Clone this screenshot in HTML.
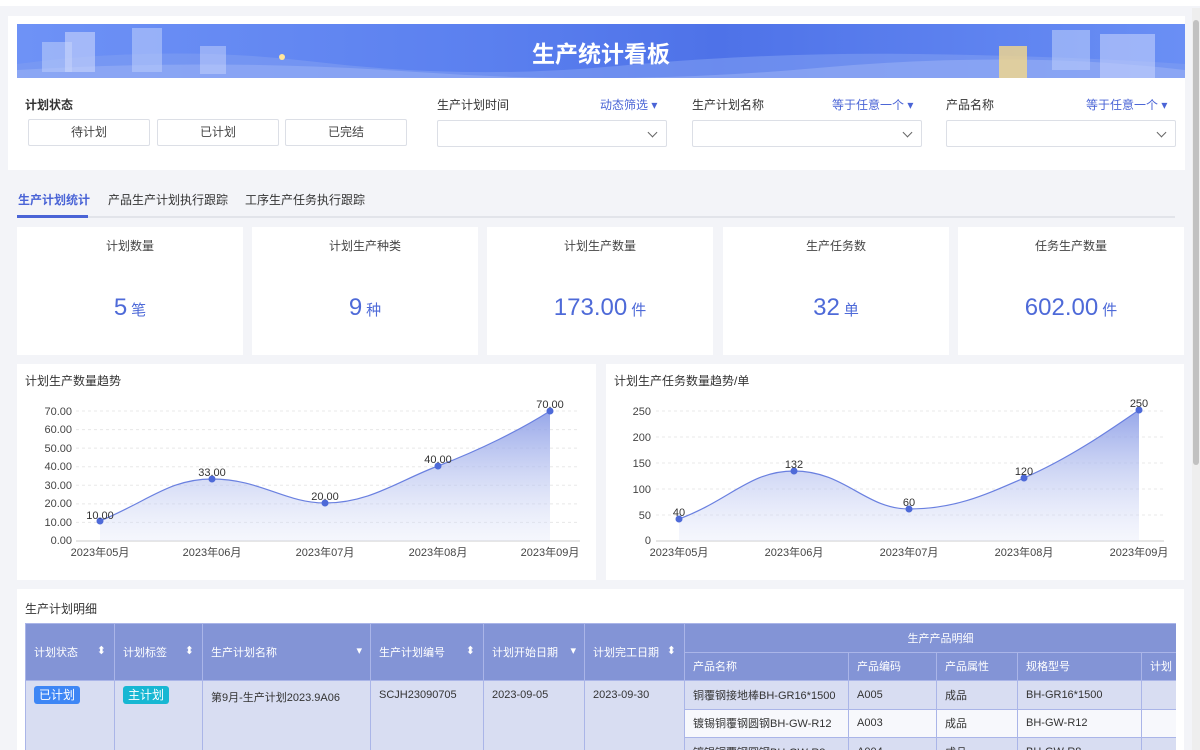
<!DOCTYPE html>
<html style="width:1200px;height:750px;overflow:hidden"><head><meta charset="utf-8"><style>
*{margin:0;padding:0;box-sizing:border-box}
body{width:1200px;height:750px;overflow:hidden;background:#f3f4f8;font-family:"Liberation Sans","Noto Sans CJK SC",sans-serif;color:#333;font-size:12px;position:relative}
.a{position:absolute}
.card{position:absolute;background:#fff}
.btn{position:absolute;border:1px solid #dcdfe6;border-radius:2px;background:#fff;text-align:center;line-height:25px;font-size:12px;color:#444;height:27px}
.sel{position:absolute;border:1px solid #dcdfe6;border-radius:2px;background:#fff;height:27px}
.sel:after{content:"";position:absolute;right:10px;top:8px;width:6px;height:6px;border-right:1px solid #666;border-bottom:1px solid #666;transform:rotate(45deg)}
.lab{position:absolute;font-size:12px;color:#333}
.blue{position:absolute;font-size:12px;color:#4a64d6}
.kt{position:absolute;top:10px;left:0;right:0;text-align:center;font-size:12px;color:#444}
.kv{position:absolute;top:67px;left:0;right:0;text-align:center;color:#4e6ad8;font-size:24px}
.kv span{font-size:15px;margin-left:4px}
.tw{position:absolute;left:25px;top:623px;width:1151px;height:127px;overflow:hidden}
table{border-collapse:collapse;table-layout:fixed}
td,th{border:1px solid #aab5e8;font-size:11px;font-weight:normal;text-align:left;padding:0 8px;height:28.5px;white-space:nowrap;overflow:hidden}
th{background:#8394d6;color:#fff}
td{background:#d8ddf2;color:#333;vertical-align:middle}
.tag{display:inline-block;color:#fff;padding:0 5px;line-height:18px;border-radius:3px;font-size:12px}
</style></head><body>
<div class="a" style="left:0;top:0;width:1200px;height:6px;background:#fff"></div>
<div class="a" style="left:1192px;top:8px;width:8px;height:742px;background:#eee"></div>
<div class="a" style="left:1193px;top:20px;width:6px;height:445px;background:#c1c1c1;border-radius:3px"></div>

<div class="card" style="left:8px;top:16px;width:1177px;height:154px"></div>
<div class="a" style="left:17px;top:24px;width:1168px;height:54px;background:linear-gradient(90deg,#6e92f6,#5b80ef 40%,#4e72e8 60%,#6a8ff5);overflow:hidden">
<svg width="1168" height="54" class="a" style="left:0;top:0">
<path d="M0 40 Q150 20 300 38 T600 42 T900 30 T1168 40 V54 H0Z" fill="#7f9cf2" opacity=".6"/>
<path d="M0 46 Q200 34 400 48 T800 44 T1168 46 V54 H0Z" fill="#9db3f6" opacity=".5"/>
<rect x="25" y="18" width="30" height="30" fill="#b8c9fa" opacity=".6"/>
<rect x="48" y="8" width="30" height="40" fill="#c9d6fb" opacity=".6"/>
<rect x="115" y="4" width="30" height="44" fill="#b7c9fa" opacity=".6"/>
<rect x="183" y="22" width="26" height="28" fill="#c7d4fb" opacity=".5"/>
<circle cx="265" cy="33" r="3" fill="#ffe59b"/>
<rect x="982" y="22" width="28" height="32" fill="#f5d88a" opacity=".8"/>
<rect x="1035" y="6" width="38" height="40" fill="#b8c9fa" opacity=".6"/>
<rect x="1083" y="10" width="55" height="44" fill="#c3d1fb" opacity=".6"/>
</svg>
<div class="a" style="left:0;right:0;top:11px;text-align:center;color:#fff;font-size:23px;font-weight:bold">生产统计看板</div>
</div>

<div class="lab" style="left:25px;top:96px;font-weight:bold">计划状态</div>
<div class="btn" style="left:28px;top:119px;width:122px">待计划</div>
<div class="btn" style="left:157px;top:119px;width:122px">已计划</div>
<div class="btn" style="left:285px;top:119px;width:122px">已完结</div>
<div class="lab" style="left:437px;top:96px">生产计划时间</div><div class="blue" style="left:600px;top:96px">动态筛选 ▾</div>
<div class="sel" style="left:437px;top:120px;width:230px"></div>
<div class="lab" style="left:692px;top:96px">生产计划名称</div><div class="blue" style="left:832px;top:96px">等于任意一个 ▾</div>
<div class="sel" style="left:692px;top:120px;width:230px"></div>
<div class="lab" style="left:946px;top:96px">产品名称</div><div class="blue" style="left:1086px;top:96px">等于任意一个 ▾</div>
<div class="sel" style="left:946px;top:120px;width:230px"></div>

<div class="a" style="left:18px;top:191px;font-size:12px;color:#4a64d6;font-weight:bold">生产计划统计</div>
<div class="a" style="left:108px;top:191px;font-size:12px;color:#333">产品生产计划执行跟踪</div>
<div class="a" style="left:245px;top:191px;font-size:12px;color:#333">工序生产任务执行跟踪</div>
<div class="a" style="left:17px;top:216px;width:1158px;height:2px;background:#e2e4ea"></div>
<div class="a" style="left:17px;top:215px;width:71px;height:3px;background:#4a64d6"></div>

<div class="card" style="left:17px;top:227px;width:226px;height:128px"><div class="kt">计划数量</div><div class="kv">5<span>笔</span></div></div>
<div class="card" style="left:252px;top:227px;width:226px;height:128px"><div class="kt">计划生产种类</div><div class="kv">9<span>种</span></div></div>
<div class="card" style="left:487px;top:227px;width:226px;height:128px"><div class="kt">计划生产数量</div><div class="kv">173.00<span>件</span></div></div>
<div class="card" style="left:723px;top:227px;width:226px;height:128px"><div class="kt">生产任务数</div><div class="kv">32<span>单</span></div></div>
<div class="card" style="left:958px;top:227px;width:226px;height:128px"><div class="kt">任务生产数量</div><div class="kv">602.00<span>件</span></div></div>

<div class="card" style="left:17px;top:364px;width:579px;height:216px"></div>
<div class="card" style="left:606px;top:364px;width:578px;height:216px"></div>
<svg class="a" style="left:0;top:0" width="1200" height="600" font-family="Liberation Sans,Noto Sans CJK SC,sans-serif" font-size="11" fill="#333">
<defs><linearGradient id="g" x1="0" y1="0" x2="0" y2="1"><stop offset="0" stop-color="#8a9ce6" stop-opacity=".9"/><stop offset="1" stop-color="#dfe4f8" stop-opacity=".3"/></linearGradient></defs>
<text x="25" y="385" font-size="12">计划生产数量趋势</text>
<text x="614" y="385" font-size="12">计划生产任务数量趋势/单</text>
<g stroke="#e8e8e8" stroke-dasharray="3,3">
<line x1="76" x2="580" y1="411" y2="411"/><line x1="76" x2="580" y1="429.6" y2="429.6"/><line x1="76" x2="580" y1="448.1" y2="448.1"/><line x1="76" x2="580" y1="466.7" y2="466.7"/><line x1="76" x2="580" y1="485.3" y2="485.3"/><line x1="76" x2="580" y1="503.9" y2="503.9"/><line x1="76" x2="580" y1="522.4" y2="522.4"/>
<line x1="656" x2="1164" y1="411" y2="411"/><line x1="656" x2="1164" y1="437" y2="437"/><line x1="656" x2="1164" y1="463" y2="463"/><line x1="656" x2="1164" y1="489" y2="489"/><line x1="656" x2="1164" y1="515" y2="515"/>
</g>
<line x1="76" x2="580" y1="541" y2="541" stroke="#ccc"/><line x1="656" x2="1164" y1="541" y2="541" stroke="#ccc"/>
<g text-anchor="end" fill="#444">
<text x="72" y="415">70.00</text><text x="72" y="433">60.00</text><text x="72" y="452">50.00</text><text x="72" y="470">40.00</text><text x="72" y="489">30.00</text><text x="72" y="507">20.00</text><text x="72" y="526">10.00</text><text x="72" y="544">0.00</text>
<text x="651" y="415">250</text><text x="651" y="441">200</text><text x="651" y="467">150</text><text x="651" y="493">100</text><text x="651" y="519">50</text><text x="651" y="544">0</text>
</g>
<g text-anchor="middle" fill="#444">
<text x="100" y="556">2023年05月</text><text x="212" y="556">2023年06月</text><text x="325" y="556">2023年07月</text><text x="438" y="556">2023年08月</text><text x="550" y="556">2023年09月</text>
<text x="679" y="556">2023年05月</text><text x="794" y="556">2023年06月</text><text x="909" y="556">2023年07月</text><text x="1024" y="556">2023年08月</text><text x="1139" y="556">2023年09月</text>
</g>
<path d="M100 521 C150 500 170 479 212 479 C260 479 285 503 325 503 C370 503 400 480 438 466 C480 450 520 430 550 411 V541 H100Z" fill="url(#g)"/>
<path d="M100 521 C150 500 170 479 212 479 C260 479 285 503 325 503 C370 503 400 480 438 466 C480 450 520 430 550 411" fill="none" stroke="#6a80e0" stroke-width="1.2"/>
<path d="M679 519 C730 500 750 471 794 471 C845 471 865 509 909 509 C955 509 985 495 1024 478 C1070 458 1110 430 1139 410 V541 H679Z" fill="url(#g)"/>
<path d="M679 519 C730 500 750 471 794 471 C845 471 865 509 909 509 C955 509 985 495 1024 478 C1070 458 1110 430 1139 410" fill="none" stroke="#6a80e0" stroke-width="1.2"/>
<g fill="#4e6ad8"><circle cx="100" cy="521" r="3.5"/><circle cx="212" cy="479" r="3.5"/><circle cx="325" cy="503" r="3.5"/><circle cx="438" cy="466" r="3.5"/><circle cx="550" cy="411" r="3.5"/>
<circle cx="679" cy="519" r="3.5"/><circle cx="794" cy="471" r="3.5"/><circle cx="909" cy="509" r="3.5"/><circle cx="1024" cy="478" r="3.5"/><circle cx="1139" cy="410" r="3.5"/></g>
<g text-anchor="middle" fill="#333">
<text x="100" y="519">10.00</text><text x="212" y="476">33.00</text><text x="325" y="500">20.00</text><text x="438" y="463">40.00</text><text x="550" y="408">70.00</text>
<text x="679" y="516">40</text><text x="794" y="468">132</text><text x="909" y="506">60</text><text x="1024" y="475">120</text><text x="1139" y="407">250</text>
</g>
</svg>

<div class="card" style="left:17px;top:589px;width:1167px;height:161px"></div>
<div class="a" style="left:25px;top:600px;font-size:12px">生产计划明细</div>
<div class="tw">
<table style="width:1171px">
<colgroup><col style="width:89px"><col style="width:88px"><col style="width:168px"><col style="width:113px"><col style="width:101px"><col style="width:100px"><col style="width:164px"><col style="width:88px"><col style="width:81px"><col style="width:124px"><col style="width:55px"></colgroup>
<tr><th rowspan="2">计划状态 <span style="float:right">⬍</span></th><th rowspan="2">计划标签 <span style="float:right">⬍</span></th><th rowspan="2">生产计划名称 <span style="float:right">▾</span></th><th rowspan="2">生产计划编号 <span style="float:right">⬍</span></th><th rowspan="2">计划开始日期 <span style="float:right">▾</span></th><th rowspan="2">计划完工日期 <span style="float:right">⬍</span></th><th colspan="5" style="text-align:center">生产产品明细</th></tr>
<tr><th>产品名称</th><th>产品编码</th><th>产品属性</th><th>规格型号</th><th>计划</th></tr>
<tr><td rowspan="3" style="vertical-align:top;padding-top:5px"><span class="tag" style="background:#3e86f5">已计划</span></td><td rowspan="3" style="vertical-align:top;padding-top:5px"><span class="tag" style="background:#17b7d3">主计划</span></td><td rowspan="3" style="vertical-align:top;padding-top:8px">第9月-生产计划2023.9A06</td><td rowspan="3" style="vertical-align:top;padding-top:8px">SCJH23090705</td><td rowspan="3" style="vertical-align:top;padding-top:8px">2023-09-05</td><td rowspan="3" style="vertical-align:top;padding-top:8px">2023-09-30</td><td>铜覆钢接地棒BH-GR16*1500</td><td>A005</td><td>成品</td><td>BH-GR16*1500</td><td></td></tr>
<tr><td style="background:#f7f8fc">镀锡铜覆钢圆钢BH-GW-R12</td><td style="background:#f7f8fc">A003</td><td style="background:#f7f8fc">成品</td><td style="background:#f7f8fc">BH-GW-R12</td><td style="background:#f7f8fc"></td></tr>
<tr><td>镀锡铜覆钢圆钢BH-GW-R8</td><td>A004</td><td>成品</td><td>BH-GW-R8</td><td></td></tr>
</table>
</div>
</body></html>
